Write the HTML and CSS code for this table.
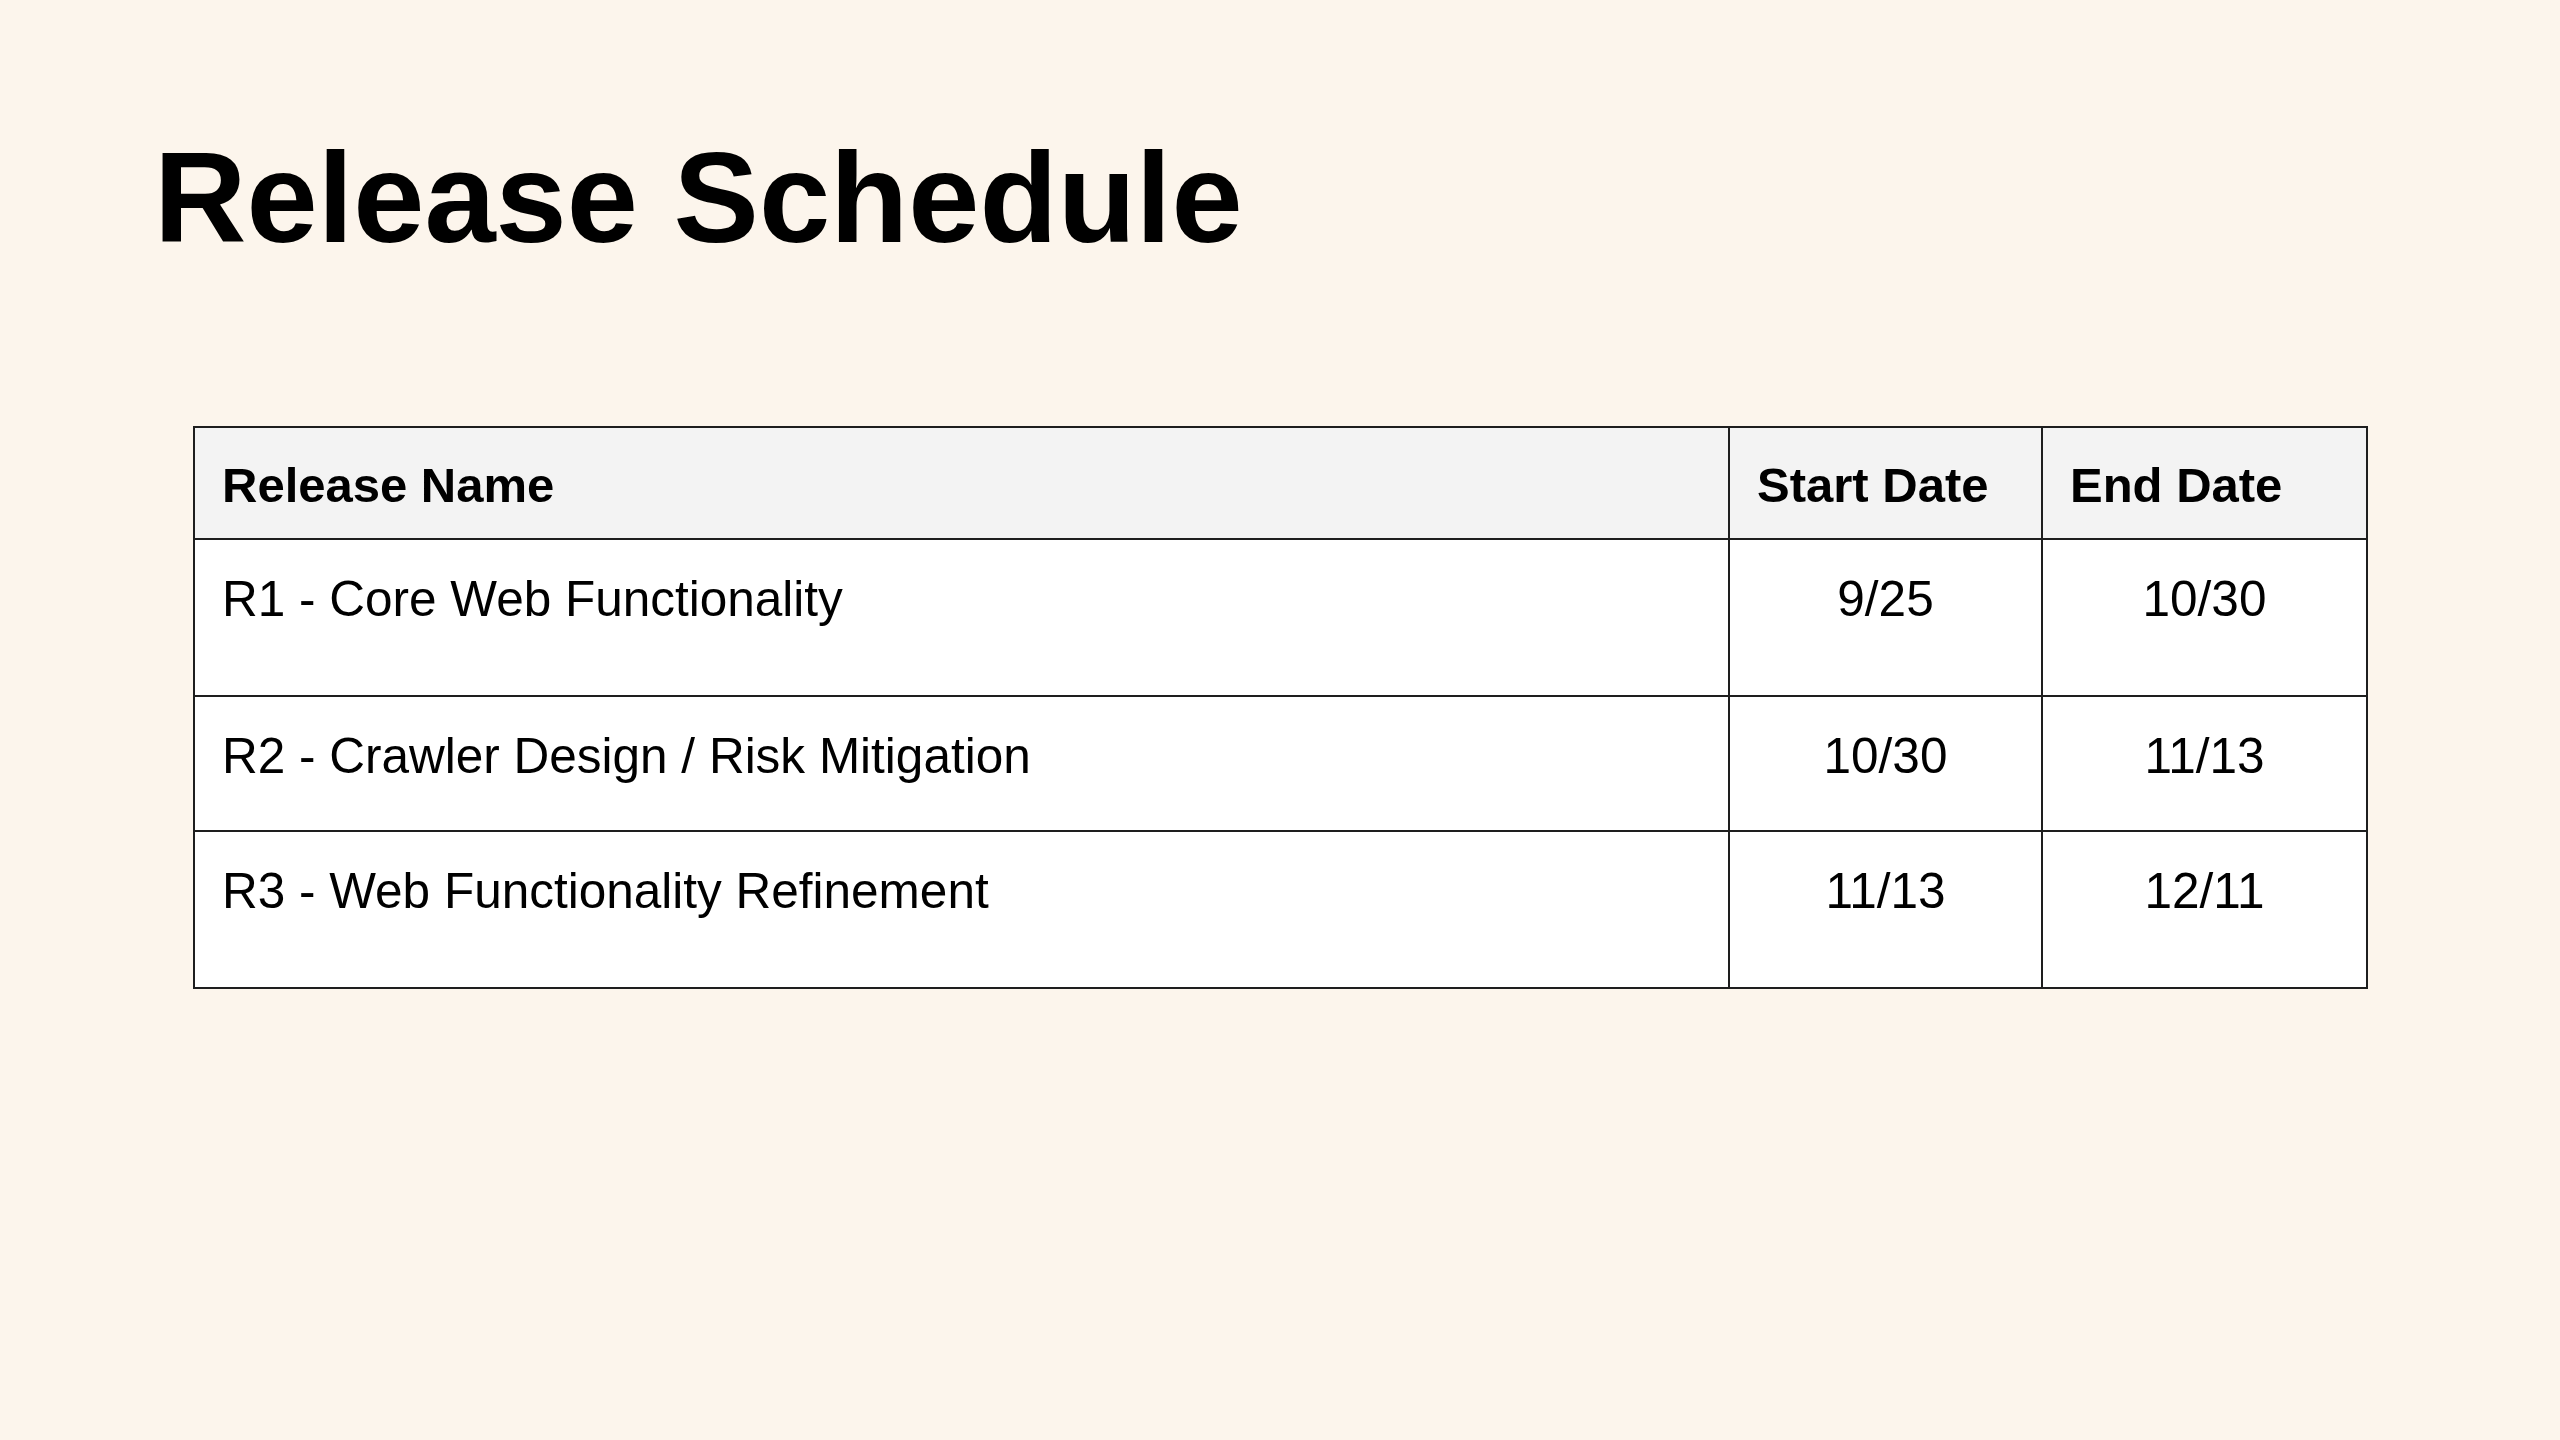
FILE: index.html
```html
<!DOCTYPE html>
<html lang="en">
<head>
<meta charset="utf-8">
<title>Release Schedule</title>
<link rel="stylesheet" href="styles.css">
</head>
<body>
<main class="slide">
  <h1 class="title">Release Schedule</h1>
  <table class="schedule">
    <colgroup>
      <col class="col-name">
      <col class="col-start">
      <col class="col-end">
    </colgroup>
    <thead>
      <tr class="row-head">
        <th>Release Name</th>
        <th>Start Date</th>
        <th>End Date</th>
      </tr>
    </thead>
    <tbody>
      <tr class="row-1">
        <td>R1 - Core Web Functionality</td>
        <td class="date">9/25</td>
        <td class="date">10/30</td>
      </tr>
      <tr class="row-2">
        <td>R2 - Crawler Design / Risk Mitigation</td>
        <td class="date">10/30</td>
        <td class="date">11/13</td>
      </tr>
      <tr class="row-3">
        <td>R3 - Web Functionality Refinement</td>
        <td class="date">11/13</td>
        <td class="date">12/11</td>
      </tr>
    </tbody>
  </table>
</main>
</body>
</html>
```

FILE: styles.css
```css
html, body {
  margin: 0;
  padding: 0;
}

body {
  background: #fcf5ec;
  font-family: "Liberation Sans", Arial, Helvetica, sans-serif;
  color: #000;
  width: 2560px;
  height: 1440px;
  overflow: hidden;
}

.slide {
  display: flex;
  flex-direction: column;
  align-items: flex-start;
  padding: 134px 0 0 154px;
}

.title {
  margin: 0;
  font-size: 128px;
  line-height: 128px;
  font-weight: 700;
}

.schedule {
  margin: 164px 0 0 39px;
  width: 2173px;
  border-collapse: collapse;
  table-layout: fixed;
  font-size: 49px;
  line-height: 1.15;
}

.col-name { width: 1535px; }
.col-start { width: 313px; }
.col-end { width: 325px; }

.schedule th,
.schedule td {
  border: 2px solid #1e1e1e;
  padding: 29px 24px 0 27px;
  vertical-align: top;
  text-align: left;
}

.schedule th {
  background: #f3f3f3;
  font-weight: 700;
}

.schedule td {
  background: #ffffff;
  font-weight: 400;
  font-size: 49.5px;
  padding-top: 31px;
}

.schedule td.date {
  text-align: center;
  padding-left: 0;
  padding-right: 0;
}

.row-head { height: 112px; }
.row-1 { height: 157px; }
.row-2 { height: 135px; }
.row-3 { height: 157px; }
```
